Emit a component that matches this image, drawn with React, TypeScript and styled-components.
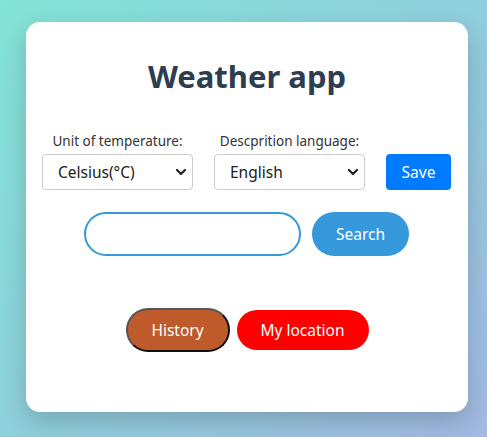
import React from "react";
import styled, { createGlobalStyle } from "styled-components";

const Global = createGlobalStyle`
  html, body { margin: 0; padding: 0; }
  body {
    width: 487px;
    height: 437px;
    overflow: hidden;
    background: linear-gradient(135deg, #82e3d6 0%, #8fcfdc 50%, #a3b9e2 100%);
    font-family: "Noto Sans", "Open Sans", sans-serif;
  }
`;

const Page = styled.div`
  display: flex;
  justify-content: flex-start;
  padding: 22px 0 0 26px;
`;

const Card = styled.div`
  width: 442px;
  height: 390px;
  box-sizing: border-box;
  background: #fff;
  border-radius: 14px;
  box-shadow: 0 10px 25px rgba(0, 0, 0, 0.18);
  display: flex;
  flex-direction: column;
  align-items: center;
`;

const Title = styled.h1`
  margin: 34px 0 0;
  font-size: 31px;
  line-height: 40px;
  font-weight: 700;
  color: #2c3e50;
`;

const SettingsRow = styled.div`
  display: flex;
  align-items: flex-end;
  gap: 21px;
  margin-top: 36px;
  margin-right: 1px;
`;

const Field = styled.div`
  display: flex;
  flex-direction: column;
  align-items: center;
  gap: 4px;
`;

const Label = styled.label`
  font-size: 13.5px;
  line-height: 18px;
  color: #333;
`;

const SelectWrap = styled.div`
  position: relative;
  width: 151px;
  height: 36px;
`;

const Select = styled.select`
  appearance: none;
  width: 100%;
  height: 100%;
  box-sizing: border-box;
  border: 1px solid #ccc;
  border-radius: 4px;
  background: #fff;
  padding: 0 15px;
  font-family: inherit;
  font-size: 15.5px;
  color: #222;
`;

const Chevron = styled.svg`
  position: absolute;
  right: 6px;
  top: 14px;
  pointer-events: none;
`;

const SaveButton = styled.button`
  width: 65px;
  height: 36px;
  border: none;
  border-radius: 4px;
  background: #007bff;
  color: #fff;
  font-family: inherit;
  font-size: 15.5px;
`;

const SearchRow = styled.div`
  display: flex;
  gap: 11px;
  margin-top: 22px;
  margin-right: 1px;
`;

const SearchInput = styled.input`
  width: 217px;
  height: 44px;
  box-sizing: border-box;
  border: 2px solid #3498db;
  border-radius: 22px;
  outline: none;
  padding: 0 14px;
  font-family: inherit;
  font-size: 16px;
`;

const PillButton = styled.button<{ $bg: string; $w: number; $h: number; $border?: boolean }>`
  width: ${(p) => p.$w}px;
  height: ${(p) => p.$h}px;
  box-sizing: border-box;
  border-radius: ${(p) => p.$h / 2}px;
  background: ${(p) => p.$bg};
  color: #fff;
  font-family: inherit;
  font-size: 15.5px;
  border: ${(p) => (p.$border ? "2px solid" : "none")};
  border-color: #555 #111 #111 #555;
`;

const BottomRow = styled.div`
  display: flex;
  align-items: center;
  gap: 7px;
  margin-top: 52px;
`;

const ChevronIcon = () => (
  <Chevron width="12" height="9" viewBox="0 0 12 9">
    <path d="M2 2 L6 6 L10 2" fill="none" stroke="#222" strokeWidth="2.2" strokeLinecap="round" strokeLinejoin="round" />
  </Chevron>
);

export default function App() {
  return (
    <>
      <Global />
      <Page>
        <Card>
          <Title>Weather app</Title>
          <SettingsRow>
            <Field>
              <Label>Unit of temperature:</Label>
              <SelectWrap>
                <Select defaultValue="c">
                  <option value="c">Celsius(°C)</option>
                  <option value="f">Fahrenheit(°F)</option>
                </Select>
                <ChevronIcon />
              </SelectWrap>
            </Field>
            <Field>
              <Label>Descprition language:</Label>
              <SelectWrap>
                <Select defaultValue="en">
                  <option value="en">English</option>
                </Select>
                <ChevronIcon />
              </SelectWrap>
            </Field>
            <SaveButton>Save</SaveButton>
          </SettingsRow>
          <SearchRow>
            <SearchInput type="text" />
            <PillButton $bg="#3498db" $w={97} $h={44}>Search</PillButton>
          </SearchRow>
          <BottomRow>
            <PillButton $bg="#bf5a2b" $w={104} $h={44} $border>History</PillButton>
            <PillButton $bg="#ff0000" $w={132} $h={40}>My location</PillButton>
          </BottomRow>
        </Card>
      </Page>
    </>
  );
}
